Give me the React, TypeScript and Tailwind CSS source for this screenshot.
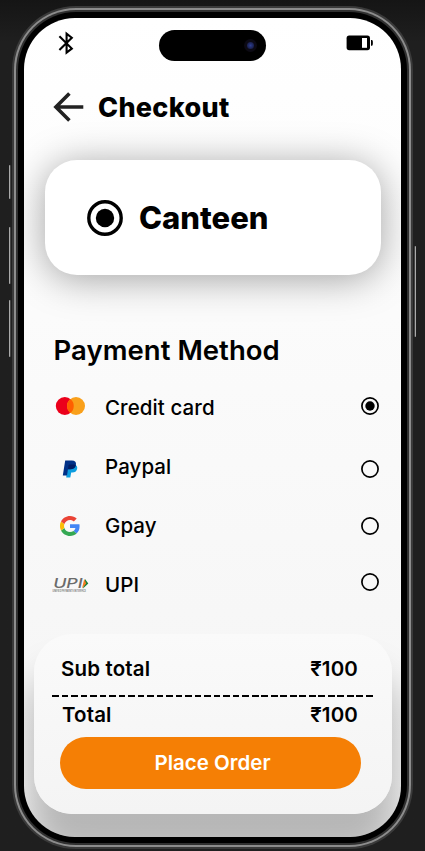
import type { ReactNode } from "react";

function BluetoothIcon() {
  return (
    <svg className="h-6 w-4" viewBox="0 0 16 24" fill="none" stroke="#000" strokeWidth="2.1">
      <path d="M1.400 5.200 13.800 17.600 8.600 21.600V2.600L13.800 6.800 1.400 18.900" />
    </svg>
  );
}

function BatteryIcon() {
  return (
    <svg className="h-4 w-7" viewBox="0 0 28 16">
      <rect x="0.6" y="0.6" width="23.4" height="14.6" rx="2.6" fill="#000" />
      <rect x="16" y="3" width="5" height="9.8" fill="#fff" />
      <path d="M25 5h1.200q.7.8.7 2.900t-.7 2.900H25z" fill="#000" />
    </svg>
  );
}

function ArrowIcon() {
  return (
    <svg className="h-[30px] w-[31px]" viewBox="0 0 31 30" fill="none" stroke="#222" strokeWidth="3.6">
      <path d="M30.300 15H3M16.400 1.500 2.900 15l13.500 13.500" />
    </svg>
  );
}

function MastercardLogo() {
  return (
    <svg className="h-[18px] w-[30px]" viewBox="0 0 30 18">
      <circle cx="9.800" cy="9" r="9" fill="#eb001b" />
      <circle cx="21" cy="9" r="9" fill="#f9a01b" />
      <path d="M15.400 2a9 9 0 0 1 0 14 9 9 0 0 1 0-14z" fill="#ff5f00" />
    </svg>
  );
}

function PaypalLogo() {
  return (
    <svg className="h-[18px] w-4" viewBox="0 0 16 18">
      <path d="M6 4.800h6.500c2.300.5 3.200 2 2.600 4.300-.6 2.500-2.300 3.500-4.700 3.500H9.200l-.9 4.900H4.200z" fill="#0c9ddf" />
      <path d="M3.200.5h6.600c3.300 0 4.700 1.600 4.100 4.500-.7 3-2.600 4.300-5.600 4.300H6l-1 6.200H.8z" fill="#003087" />
      <path d="M6.600 5.300q.2-.7.9-.7h4.200q1.300 0 2.200.5c-.7 3-2.600 4.200-5.600 4.200H6z" fill="#001c64" />
    </svg>
  );
}

function GoogleLogo() {
  return (
    <svg className="size-5" viewBox="0 0 48 48">
      <path fill="#4285f4" d="M47 24.500c0-1.700-.1-3.200-.4-4.700H24v9h12.900c-.6 3-2.300 5.500-4.800 7.200l7.700 6C44.400 37.900 47 31.800 47 24.500z" />
      <path fill="#34a853" d="M24 48c6.500 0 11.900-2.100 15.900-5.800l-7.700-6c-2.200 1.500-4.900 2.300-8.200 2.300-6.300 0-11.600-4.200-13.500-9.900l-8 6.200C6.500 42.600 14.600 48 24 48z" />
      <path fill="#fbbc05" d="M10.500 28.600a14.500 14.500 0 0 1 0-9.200l-8-6.200a24 24 0 0 0 0 21.600z" />
      <path fill="#ea4335" d="M24 9.500c3.500 0 6.700 1.200 9.200 3.600l6.900-6.900C35.900 2.400 30.500 0 24 0 14.600 0 6.500 5.400 2.500 13.200l8 6.200C12.400 13.700 17.700 9.500 24 9.500z" />
    </svg>
  );
}

function UpiLogo() {
  return (
    <svg className="h-6 w-9 overflow-visible" viewBox="0 0 36 24">
      <text x="1.200" y="18.400" textLength="29.500" lengthAdjust="spacingAndGlyphs" fontFamily="Inter, sans-serif" fontSize="12.800" fontStyle="italic" fontWeight="500" fill="#6b6b6b">UPI</text>
      <path d="M33 8.900 36.300 13.600 31 18.500z" fill="#14803c" />
      <path d="M32.200 8.900 34.200 13.600 30 18.500z" fill="#f47b20" />
      <text x="0.600" y="22.200" textLength="33.500" lengthAdjust="spacingAndGlyphs" fontFamily="Inter, sans-serif" fontSize="2.800" fontWeight="500" fill="#555">UNIFIED PAYMENTS INTERFACE</text>
    </svg>
  );
}

function Radio({ checked = false }: { checked?: boolean }) {
  return (
    <svg className="size-[18px]" viewBox="0 0 18 18">
      <circle cx="9" cy="9" r="8.100" fill="none" stroke="#000" strokeWidth="1.700" />
      {checked && <circle cx="9" cy="9" r="4.700" />}
    </svg>
  );
}

function Method({ logo, label, shift, checked }: { logo: ReactNode; label: string; shift: string; checked?: boolean }) {
  return (
    <div className="flex h-[59px] items-center">
      <div className={`flex w-[34px] justify-center ${shift}`}>{logo}</div>
      <span className="ml-[18px] flex-1 text-[20.5px] leading-6 font-[450] tracking-[0.08px]">{label}</span>
      <div className={`flex ${shift}`}>
        <Radio checked={checked} />
      </div>
    </div>
  );
}

function Amount({ label, value }: { label: string; value: string }) {
  return (
    <div className="flex h-6 items-center justify-between text-[20.5px] leading-6 font-[580] tracking-[0.15px]">
      <span>{label}</span>
      <span>{value}</span>
    </div>
  );
}

export default function App() {
  return (
    <div className="relative h-[851px] w-[425px] overflow-hidden bg-linear-to-b from-[#151515] via-[#1f1f1f] via-5% to-[#1f1f1f] pt-[6px] pl-3 font-['Inter',sans-serif] text-black">
      <div className="absolute top-[165px] left-[9px] h-[34px] w-[2px] rounded-sm border-l border-[#aaa] bg-[#444]" />
      <div className="absolute top-[227px] left-[9px] h-[57px] w-[2px] rounded-sm border-l border-[#aaa] bg-[#444]" />
      <div className="absolute top-[300px] left-[9px] h-[57px] w-[2px] rounded-sm border-l border-[#aaa] bg-[#444]" />
      <div className="absolute top-[246px] left-[414px] h-[91px] w-[2px] rounded-sm border-r border-[#aaa] bg-[#444]" />

      <div className="h-[843px] w-[401px] rounded-[64px] bg-[#3a3a3a] p-[2px]">
        <div className="h-full rounded-[62px] bg-[#8c8c8c] p-[2px]">
          <div className="h-full rounded-[60px] bg-[#303030] p-[2px]">
            <div className="h-full rounded-[58px] bg-black p-[6px]">
              <main className="h-[819px] w-[377px] overflow-hidden rounded-[51px] bg-linear-to-b from-white to-[#f4f4f4]">
                <div className="flex h-[73px] items-start pt-3 pl-[34px]">
                  <div className="mt-[1px]"><BluetoothIcon /></div>
                  <div className="ml-[85px] flex h-[31px] w-[107px] items-center justify-end rounded-full bg-black pr-[9px]">
                    <div className="flex size-[13px] items-center justify-center rounded-full bg-[#0c0a14]">
                      <div className="size-[7px] rounded-full bg-radial from-[#2d3e91] to-[#111331]" />
                    </div>
                  </div>
                  <div className="mt-[5px] ml-20"><BatteryIcon /></div>
                </div>

                <header className="flex h-8 items-center pl-[29px]">
                  <ArrowIcon />
                  <h1 className="mt-px ml-[14px] text-[27px] leading-8 font-extrabold tracking-[0.3px]">Checkout</h1>
                </header>

                <section className="mt-[37px] ml-[21px] flex h-[115px] w-[336px] items-center rounded-[32px] bg-white pt-px pl-[42px] shadow-[0_4px_38px_rgba(0,0,0,0.36)]">
                  <svg className="size-9" viewBox="0 0 36 36">
                    <circle cx="18" cy="18" r="16.200" fill="none" stroke="#000" strokeWidth="3.400" />
                    <circle cx="18" cy="18" r="9.200" />
                  </svg>
                  <h2 className="ml-4 text-[31px] leading-9 font-extrabold">Canteen</h2>
                </section>

                <section className="mt-[61px] ml-[29px] w-[326px]">
                  <h2 className="ml-[0.5px] text-[27.5px] leading-7 font-[580] tracking-[0.05px]">Payment Method</h2>
                  <div className="mt-[14px]">
                    <Method logo={<MastercardLogo />} label="Credit card" shift="-mt-[3px]" checked />
                    <Method logo={<PaypalLogo />} label="Paypal" shift="mt-[5px]" />
                    <Method logo={<GoogleLogo />} label="Gpay" shift="mt-px" />
                    <Method logo={<UpiLogo />} label="UPI" shift="-mt-[6px]" />
                  </div>
                </section>

                <section className="mt-5 ml-[10px] h-[180px] w-[358px] rounded-[38px] bg-linear-to-b from-[#fafafa] to-[#f4f4f4] pt-[23px] shadow-[0_42px_36px_4px_rgba(0,0,0,0.25)]">
                  <div className="pr-[34px] pl-[27px]"><Amount label="Sub total" value="₹100" /></div>
                  <div className="mt-[14px] ml-[18px] h-[2px] w-[321px] bg-[repeating-linear-gradient(90deg,#000_0_6.800px,transparent_6.800px_9.510px)]" />
                  <div className="mt-[6px] pr-[34px] pl-[28px]"><Amount label="Total" value="₹100" /></div>
                  <button className="mt-[10px] ml-[26px] block h-[52px] w-[301px] rounded-full bg-[#f57f05] pt-px pl-1 text-[20.5px] font-[580] text-white">Place Order</button>
                </section>
              </main>
            </div>
          </div>
        </div>
      </div>
    </div>
  );
}
